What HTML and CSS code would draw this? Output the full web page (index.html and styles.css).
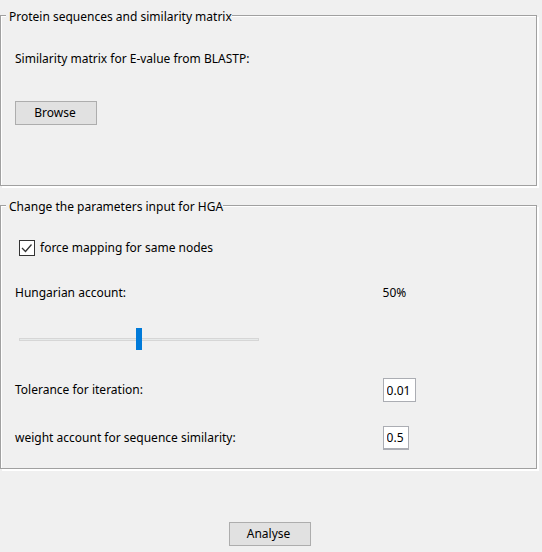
FILE: index.html
```html
<!DOCTYPE html>
<html lang="en">
<head>
<meta charset="utf-8">
<title>HGA parameters</title>
<link rel="stylesheet" href="styles.css">
</head>
<body>
<form class="panel">
  <fieldset class="group group-files">
    <legend>Protein sequences and similarity matrix</legend>
    <label class="file-label" for="browse">Similarity matrix for E-value from BLASTP:</label>
    <button class="btn" id="browse" type="button">Browse</button>
  </fieldset>
  <fieldset class="group group-params">
    <legend>Change the parameters input for HGA</legend>
    <label class="check">
      <input type="checkbox" checked>
      <svg class="tick" viewBox="0 0 16 16" aria-hidden="true"><path d="M3 8 L6.500 11.500 L12.500 4.500" /></svg>
      <span>force mapping for same nodes</span>
    </label>
    <div class="row">
      <label for="account">Hungarian account:</label>
      <output for="account">50%</output>
    </div>
    <input class="slider" id="account" type="range" min="0" max="100" value="50">
    <div class="row row-field">
      <label for="tolerance">Tolerance for iteration:</label>
      <input class="field field-wide" id="tolerance" type="text" value="0.01">
    </div>
    <div class="row row-field">
      <label for="weight">weight account for sequence similarity:</label>
      <input class="field field-narrow" id="weight" type="text" value="0.5">
    </div>
  </fieldset>
  <button class="btn btn-main" type="button">Analyse</button>
</form>
</body>
</html>
```
FILE: styles.css
```css
* {
  box-sizing: border-box;
}

body {
  margin: 0;
  background: #f0f0f0;
  color: #000;
}

body,
button,
input {
  font: 12px/16px "Noto Sans", "Open Sans", sans-serif;
}

.panel {
  display: flex;
  flex-direction: column;
  padding: 6px 3px 0 0;
}

.group {
  display: flex;
  flex-direction: column;
  align-items: flex-start;
  min-width: 0;
  margin: 0 2px 0 0;
  border: 1px solid #a0a0a0;
  padding: 0 14px;
  box-shadow: inset 1px 1px #fff, 2px 2px #fff;
}

.group legend {
  margin-left: -9px;
  padding: 3px 0 0 3px;
  background: #f0f0f0;
}

.group-files {
  padding-top: 26px;
  padding-bottom: 60px;
}

.file-label {
  margin-bottom: 34px;
}

.group-params {
  margin-top: 10px;
  padding-top: 25px;
  padding-bottom: 18px;
}

.btn {
  width: 82px;
  height: 24px;
  border: 1px solid #adadad;
  border-radius: 0;
  padding: 0 2px 0 0;
  background: #e1e1e1;
  color: #000;
}

.btn-main {
  align-self: center;
  margin-top: 53px;
}

.check {
  display: grid;
  grid-template-columns: 16px auto;
  align-items: center;
  column-gap: 5px;
  margin-left: 4px;
}

.check input,
.tick {
  grid-area: 1 / 1;
  width: 16px;
  height: 16px;
  margin: 0;
}

.check input {
  appearance: none;
  border: 1px solid #333;
  background: #fff;
}

.tick {
  position: relative;
  fill: none;
  stroke: #333;
  stroke-width: 1.3;
  pointer-events: none;
}

.check input:not(:checked) + .tick {
  visibility: hidden;
}

.row {
  display: grid;
  grid-template-columns: 29fr 11fr;
  align-items: center;
  width: 100%;
  margin-top: 29px;
}

.slider {
  appearance: none;
  width: 240px;
  height: 24px;
  margin: 26px 0 3px 4px;
  background: transparent;
}

.slider::-webkit-slider-runnable-track {
  height: 3px;
  border: 1px solid #d6d6d6;
  background: #e7eaea;
}

.slider::-webkit-slider-thumb {
  appearance: none;
  width: 6px;
  height: 22px;
  margin-top: -11px;
  background: #007ad9;
}

.row-field {
  margin-top: 24px;
}

.field {
  height: 24px;
  border: 1px solid #abadb3;
  border-radius: 0;
  padding: 0 3px;
  background: #fff;
  color: #000;
}

.field-wide {
  width: 33px;
}

.field-narrow {
  width: 26px;
  border-bottom-width: 2px;
}
```
